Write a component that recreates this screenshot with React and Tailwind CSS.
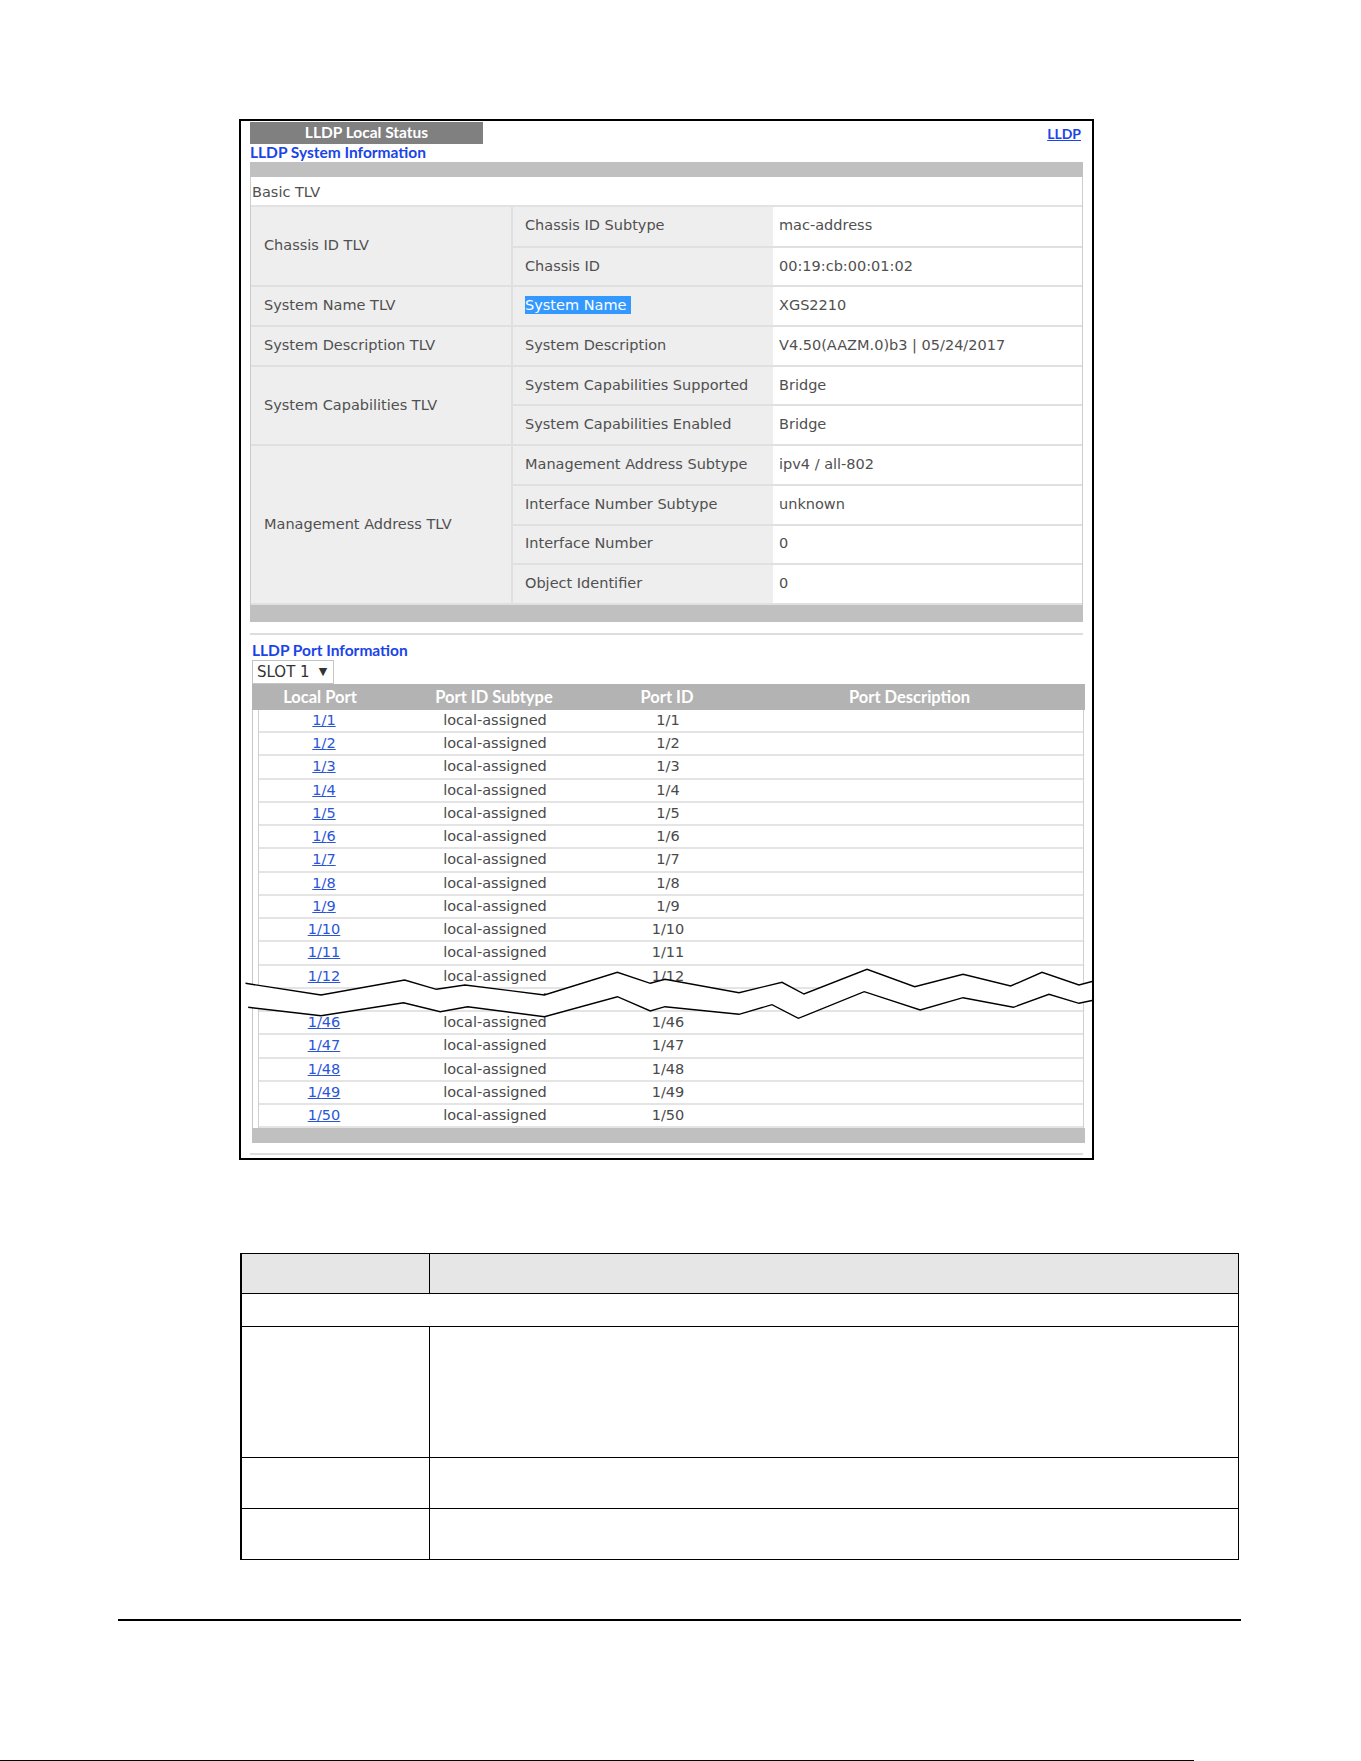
import React from "react";

const sysRows = [
  { group: "Chassis ID TLV", span: 2, label: "Chassis ID Subtype", value: "mac-address" },
  { label: "Chassis ID", value: "00:19:cb:00:01:02" },
  { group: "System Name TLV", span: 1, label: "System Name", value: "XGS2210", selected: true },
  { group: "System Description TLV", span: 1, label: "System Description", value: "V4.50(AAZM.0)b3 | 05/24/2017" },
  { group: "System Capabilities TLV", span: 2, label: "System Capabilities Supported", value: "Bridge" },
  { label: "System Capabilities Enabled", value: "Bridge" },
  { group: "Management Address TLV", span: 4, label: "Management Address Subtype", value: "ipv4 / all-802" },
  { label: "Interface Number Subtype", value: "unknown" },
  { label: "Interface Number", value: "0" },
  { label: "Object Identifier", value: "0" },
];

const ports = [1, 2, 3, 4, 5, 6, 7, 8, 9, 10, 11, 12, 45, 46, 47, 48, 49, 50];

// zigzag "break" drawn over the port list
const upper = [
  [6, 22], [9.5, 23.3], [85, 35], [168.6, 20], [200.4, 29.3], [229, 25], [308.4, 35], [381.4, 12.3],
  [414.3, 23.3], [429, 19.3], [503, 32.7], [546, 22.3], [568, 34], [631, 9.3], [678.7, 26.7],
  [727, 14.3], [774.7, 26], [806, 12.3], [843, 25], [856, 21.5],
];
const lower = [
  [6, 46], [12.2, 47.3], [85, 55.7], [167.5, 42.7], [204.2, 51.7], [231.6, 46.7], [308.4, 56.7],
  [381.4, 36.7], [414.3, 51], [429, 46.7], [503, 54.3], [536, 44.7], [562.4, 58.3], [628.2, 31.7],
  [684.2, 50], [727, 37.7], [777.4, 47.3], [813, 34.3], [843, 43.3], [856, 40.5],
];
const pts = (arr) => arr.map((p) => p.join(",")).join(" ");

function BreakMark() {
  return (
    <svg
      className="absolute left-[236px] top-[960px]"
      width="864"
      height="70"
      viewBox="0 0 864 70"
    >
      <polygon points={pts([...upper, ...[...lower].reverse()])} fill="#ffffff" />
      <polyline points={pts(upper.slice(1))} fill="none" stroke="#000" strokeWidth="1.4" />
      <polyline points={pts(lower.slice(1))} fill="none" stroke="#000" strokeWidth="1.4" />
    </svg>
  );
}

function SystemTable() {
  return (
    <div className="border-l border-r border-[#cccccc]">
      <div className="h-[30px] flex items-center pl-px pt-[3px] border-b-2 border-[#e2e2e2] text-[14.5px] text-[#505050]">
        Basic TLV
      </div>
      <table className="w-full table-fixed border-collapse text-[14.5px] text-[#505050]">
        <colgroup>
          <col className="w-[261px]" />
          <col className="w-[261px]" />
          <col />
        </colgroup>
        <tbody>
          {sysRows.map((r) => (
            <tr key={r.label} className="h-[39.7px]">
              {r.group && (
                <td
                  rowSpan={r.span}
                  className="bg-[#eeeeee] pl-[13px] border-b-2 border-r-2 border-[#e0e0e0] align-middle"
                >
                  {r.group}
                </td>
              )}
              <td className="bg-[#eeeeee] pl-[12px] border-b-2 border-[#e0e0e0]">
                {r.selected ? (
                  <span className="bg-[#3399ff] text-white pr-[5px] py-px">{r.label}</span>
                ) : (
                  r.label
                )}
              </td>
              <td className="bg-white pl-[6px] border-b-2 border-[#e0e0e0]">{r.value}</td>
            </tr>
          ))}
        </tbody>
      </table>
    </div>
  );
}

function PortTable() {
  return (
    <div className="ml-[2px] -mr-[2px]">
      <div className="grid grid-cols-[136px_212px_134px_351px] h-[26px] items-center bg-[#b3b3b3] text-white font-['Lato',sans-serif] font-bold text-[16.5px] text-center">
        <div>Local Port</div>
        <div>Port ID Subtype</div>
        <div>Port ID</div>
        <div>Port Description</div>
      </div>
      <div className="border-l border-[#c8c8c8]">
        <div className="ml-[5px] mr-[1px] border-l border-r border-[#d0d0d0]">
          {ports.map((p) => (
            <div
              key={p}
              className="grid grid-cols-[130px_212px_134px_1fr] h-[23.25px] items-center border-b-2 border-[#e4e4e4] text-[14.5px] text-[#4a4a4a] text-center"
            >
              <a href="#" className="text-[#2a55d8] underline">1/{p}</a>
              <div>local-assigned</div>
              <div>1/{p}</div>
              <div></div>
            </div>
          ))}
        </div>
      </div>
      <div className="h-[15px] bg-[#c0c0c0]"></div>
    </div>
  );
}

export default function App() {
  return (
    <div className="relative w-[1361px] h-[1761px] bg-white font-['DejaVu_Sans',sans-serif] overflow-hidden">
      <div className="ml-[239px] mt-[119px] w-[855px] border-2 border-black pt-px px-[9px] pb-[3px]">
        <div className="flex justify-between items-start">
          <div className="w-[233px] h-[22px] bg-[#808080] text-white font-['Lato',sans-serif] font-bold text-[15.5px] flex items-center justify-center">
            LLDP Local Status
          </div>
          <a href="#" className="mt-[3px] mr-[2px] text-[#1a44e8] underline font-['Lato',sans-serif] font-bold text-[14px] leading-[18px]">
            LLDP
          </a>
        </div>
        <div className="h-[18px] flex items-center text-[#1a44e8] font-['Lato',sans-serif] font-bold text-[15.5px]">
          LLDP System Information
        </div>
        <div className="h-[15px] bg-[#c0c0c0]"></div>
        <SystemTable />
        <div className="h-[17px] bg-[#c0c0c0]"></div>
        <div className="mt-[11px] h-[2px] bg-[#dddddd]"></div>
        <div className="mt-[7px] h-[18px] pl-[2px] flex items-center text-[#1a44e8] font-['Lato',sans-serif] font-bold text-[15.5px]">
          LLDP Port Information
        </div>
        <div className="ml-[2px] w-[82px] h-[24px] border border-[#c4c4c4] flex items-center pl-[4px] text-[15px] text-[#333333]">
          <span>SLOT 1</span>
          <span className="ml-[9px] text-[11px]">▼</span>
        </div>
        <PortTable />
        <div className="mt-[10px] h-[2px] bg-[#dddddd]"></div>
      </div>
      <BreakMark />

      <table className="ml-[240px] mt-[93px] w-[999px] table-fixed border-collapse">
        <colgroup>
          <col className="w-[188px]" />
          <col />
        </colgroup>
        <tbody>
          <tr className="h-[40px] bg-[#e6e6e6]">
            <th className="border border-black border-l-2"></th>
            <th className="border border-black"></th>
          </tr>
          <tr className="h-[33px]">
            <td colSpan={2} className="border border-black border-l-2"></td>
          </tr>
          <tr className="h-[131px]">
            <td className="border border-black border-l-2"></td>
            <td className="border border-black"></td>
          </tr>
          <tr className="h-[51px]">
            <td className="border border-black border-l-2"></td>
            <td className="border border-black"></td>
          </tr>
          <tr className="h-[51px]">
            <td className="border border-black border-l-2"></td>
            <td className="border border-black"></td>
          </tr>
        </tbody>
      </table>

      <div className="ml-[118px] mt-[59px] w-[1123px] h-[2px] bg-black"></div>
      <div className="mt-[139px] w-[1194px] h-px bg-black"></div>
    </div>
  );
}
